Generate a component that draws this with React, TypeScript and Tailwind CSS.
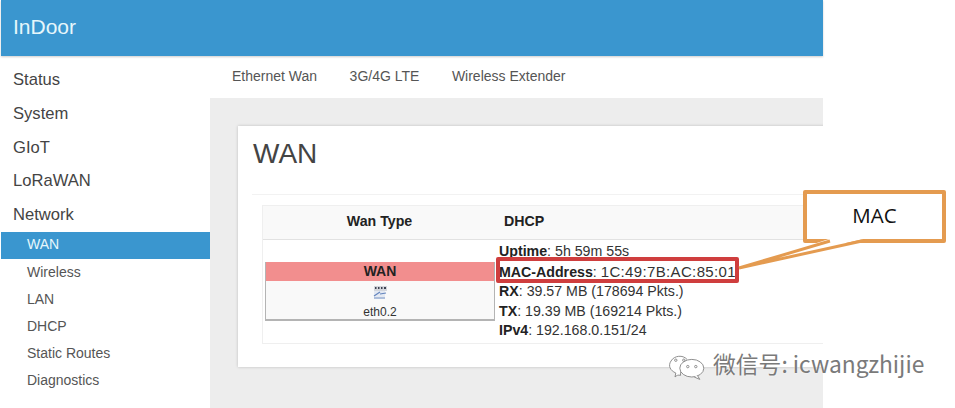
const topMenu = ['Status', 'System', 'GIoT', 'LoRaWAN', 'Network'];
const subMenu = ['WAN', 'Wireless', 'LAN', 'DHCP', 'Static Routes', 'Diagnostics'];
const tabs = ['Ethernet Wan', '3G/4G LTE', 'Wireless Extender'];

function PortIcon() {
  return (
    <svg width="18" height="15" viewBox="0 0 18 15" className="block">
      <rect x="3" y="1" width="13" height="5" fill="#d3d6dc" />
      <path d="M4 3h1.5M7 3h1.5M10 3h1.5M13 3h2" stroke="#3d4250" strokeWidth="2" />
      <rect x="3" y="6" width="11" height="6" fill="#e4e9f2" />
      <path d="M3 11L9 7M3 13h11M9 9l6-1" stroke="#6485bd" strokeWidth="1.2" fill="none" />
    </svg>
  );
}

function Stat({ label, value, wide }: { label: string; value: string; wide?: boolean }) {
  return (
    <div>
      <b className="font-bold text-[#222]">{label}</b>:{' '}
      <span className={wide ? 'text-[15px] leading-[19px] tracking-[0.35px]' : ''}>{value}</span>
    </div>
  );
}

function WechatIcon() {
  return (
    <svg width="40" height="30" viewBox="0 0 50 37" fill="none" stroke="#8a8a8a" strokeWidth="1.2">
      <path d="M22 17c-3 1-6 7-5 12-3-1-5 0-7 2l1-5C4 23 1 17 5 11 9 4 20 3 25 9" fill="#ffffff" />
      <ellipse cx="31" cy="20" rx="15" ry="11" fill="#ffffff" />
      <path d="M38 29l3 5-7-3" fill="#ffffff" />
      <circle cx="11" cy="10" r="1.5" />
      <circle cx="21" cy="10" r="1.5" />
      <circle cx="26" cy="18" r="1.5" />
      <circle cx="36" cy="18" r="1.5" />
    </svg>
  );
}

export default function App() {
  return (
    <div className="relative w-[955px] h-[408px] overflow-hidden bg-white font-['Liberation_Sans',Arial,sans-serif] text-[#333]">
      <div className="ml-px w-[822px] h-full flex flex-col">
        <header className="h-[56px] shrink-0 bg-[#3a96cf] shadow-[0_1px_2px_rgba(0,0,0,0.2)] flex items-center pl-3 pb-[2px] text-[21px] text-[#e6f6fb]">
          InDoor
        </header>

        <div className="flex flex-1 min-h-0">
          <nav className="w-[209px] shrink-0 pt-[8px]">
            {topMenu.map((item) => (
              <div key={item} className="h-[33.6px] pl-3 flex items-center text-[16.6px] text-[#444]">
                {item}
              </div>
            ))}
            <div>
              {subMenu.map((item, i) => (
                <div
                  key={item}
                  className={
                    i === 0
                      ? 'h-[27px] pl-[26px] pb-[2px] flex items-center text-sm bg-[#3a96cf] text-[#e6f6fb]'
                      : 'h-[27.2px] pl-[26px] pb-[2px] flex items-center text-sm text-[#555]'
                  }
                >
                  {item}
                </div>
              ))}
            </div>
          </nav>

          <main className="flex-1 min-w-0 flex flex-col overflow-hidden">
            <div className="h-[42px] shrink-0 flex items-center pl-[22px] pb-[2px] gap-[32.5px] text-sm text-[#555]">
              {tabs.map((t) => (
                <span key={t}>{t}</span>
              ))}
            </div>

            <div className="flex-1 bg-[#ededed] pt-[28px] pl-[28px]">
              <section className="h-[241px] -mr-[10px] bg-white shadow-[0_0_3px_rgba(0,0,0,0.2)]">
                <h2 className="h-[69px] ml-[14px] pl-px pt-[11px] text-[28px] leading-[33px] font-normal text-[#444] border-b border-[#f2f2f2]">
                  WAN
                </h2>
                <div className="mt-[10px] ml-[24px] border-l border-t border-b border-[#efefef]">
                  <div className="h-[34px] bg-[#f9f9f9] border-b border-[#e2e2e2] flex items-center pb-px text-[14.2px] font-bold text-[#222]">
                    <div className="w-[233px] text-center">Wan Type</div>
                    <div className="pl-[8px]">DHCP</div>
                  </div>
                  <div className="h-[103px] flex">
                    <div className="w-[236px] shrink-0 pl-[2px] pt-[22px]">
                      <div className="w-[230px] h-[59px] bg-[#f9f9f9] border-b-2 border-x border-[#b4b4b4] flex flex-col items-center">
                        <div className="w-full h-[20px] bg-[#f28e8e] text-center text-sm leading-[19px] font-bold text-[#222]">
                          WAN
                        </div>
                        <div className="mt-[4px]">
                          <PortIcon />
                        </div>
                        <div className="text-xs leading-[18px] mt-[3px] text-[#333]">eth0.2</div>
                      </div>
                    </div>
                    <div className="pt-[2px] text-[14.2px] leading-[19.5px] text-[#333]">
                      <Stat label="Uptime" value="5h 59m 55s" />
                      <Stat label="MAC-Address" value="1C:49:7B:AC:85:01" wide />
                      <Stat label="RX" value="39.57 MB (178694 Pkts.)" />
                      <Stat label="TX" value="19.39 MB (169214 Pkts.)" />
                      <Stat label="IPv4" value="192.168.0.151/24" />
                    </div>
                  </div>
                </div>
              </section>
            </div>
          </main>
        </div>
      </div>

      {/* annotation drawn over the screenshot */}
      <div className="absolute left-[496px] top-[257px] w-[243px] h-[26px] border-4 border-[#cf3e3e] rounded-[2px]" />
      <div className="absolute left-[803px] top-[190px] w-[143px] h-[53px] border-4 border-[#e49b50] rounded-[2px] bg-white flex items-center justify-center pb-[2px] font-['Open_Sans',sans-serif] font-medium text-[20.5px] text-[#111]">
        MAC
      </div>
      <svg className="absolute left-[735px] top-[236px]" width="135" height="36" viewBox="0 0 135 36">
        <path d="M4 32L94 3H128Z" fill="#ffffff" />
        <path d="M4 32L95 5M4 32L127 5" stroke="#e49b50" strokeWidth="3" fill="none" />
      </svg>

      {/* watermark */}
      <div className="absolute left-[667px] top-[352px] flex items-start gap-[6px]">
        <WechatIcon />
        <span className="-mt-[2px] text-[22.8px] leading-[28px] text-[#7a7a7a] [text-shadow:0_0_2px_#ffffff] font-['Noto_Sans_CJK_SC',sans-serif]">微信号: icwangzhijie</span>
      </div>
    </div>
  );
}
